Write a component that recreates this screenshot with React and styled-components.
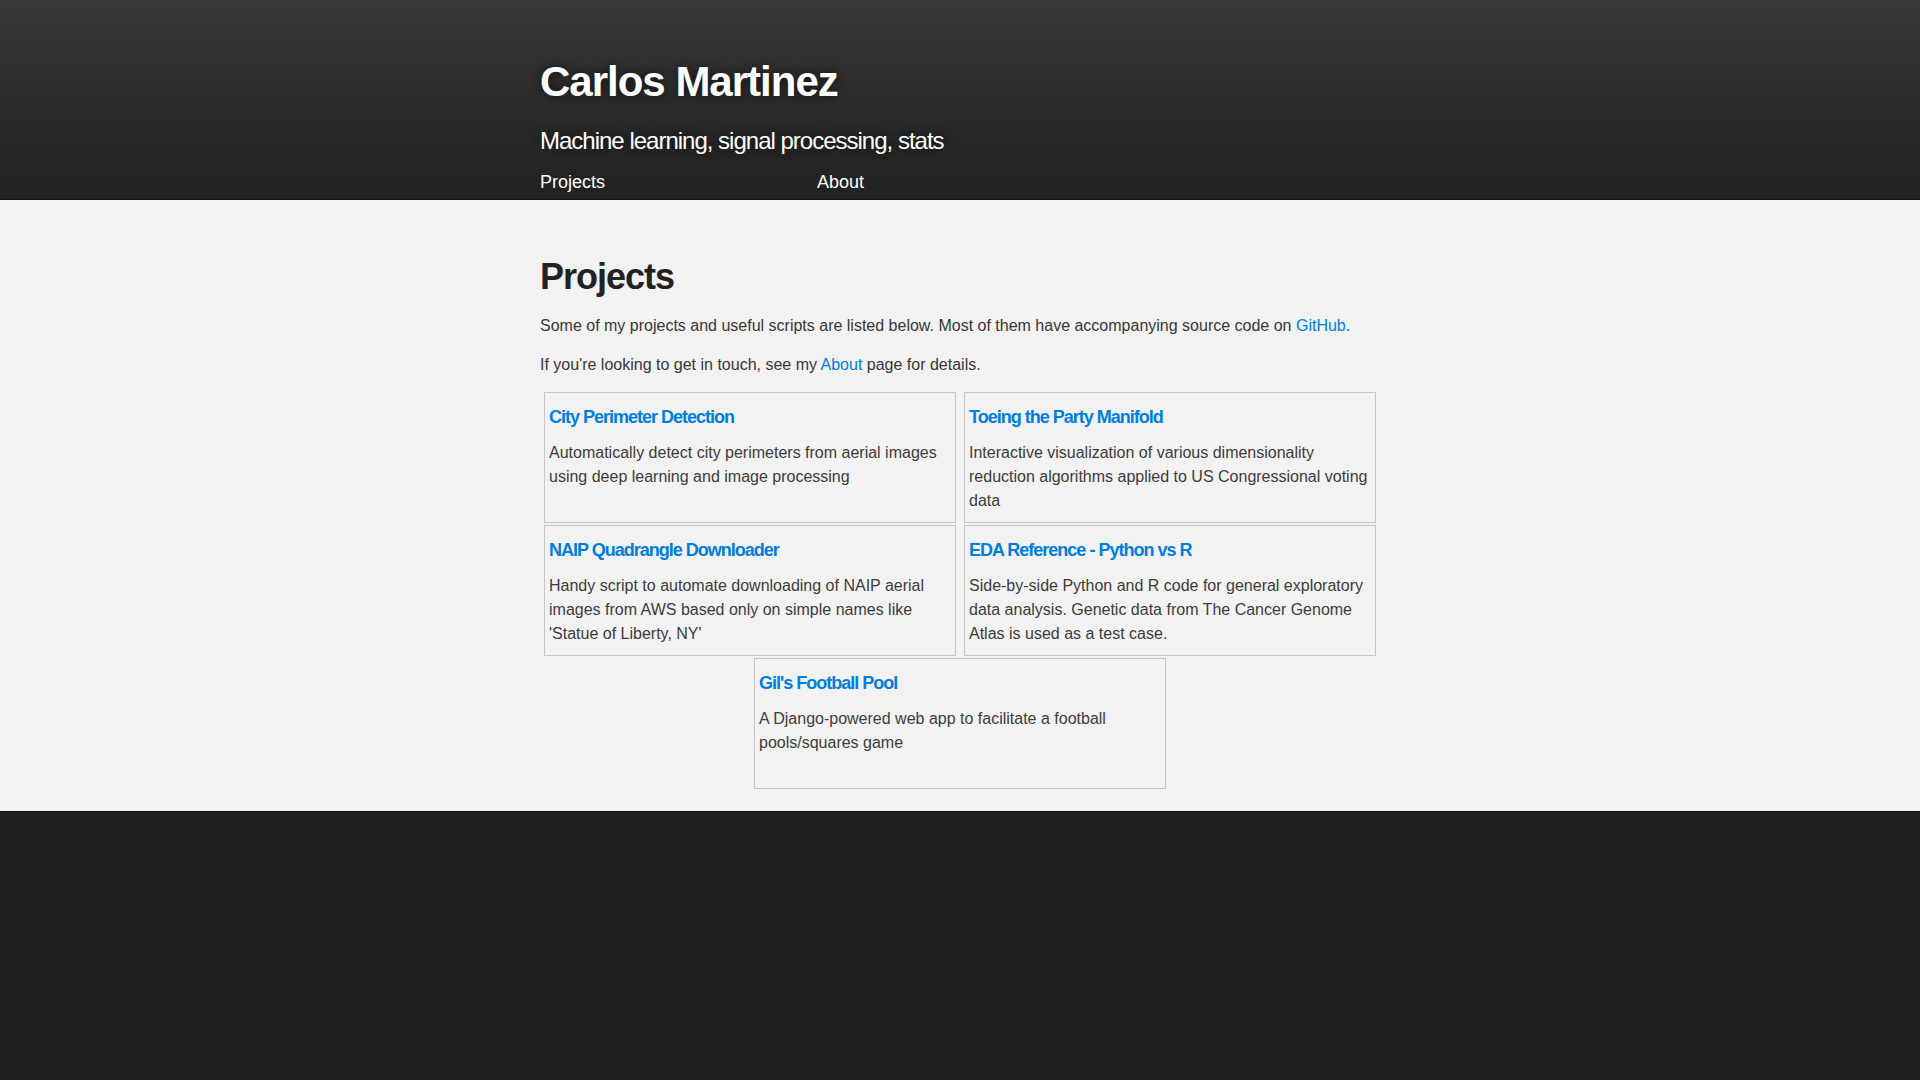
import React from "react";
import styled, { createGlobalStyle } from "styled-components";

const projects = [
  {
    name: "City Perimeter Detection",
    description:
      "Automatically detect city perimeters from aerial images using deep learning and image processing",
  },
  {
    name: "Toeing the Party Manifold",
    description:
      "Interactive visualization of various dimensionality reduction algorithms applied to US Congressional voting data",
  },
  {
    name: "NAIP Quadrangle Downloader",
    description:
      "Handy script to automate downloading of NAIP aerial images from AWS based only on simple names like 'Statue of Liberty, NY'",
  },
  {
    name: "EDA Reference - Python vs R",
    description:
      "Side-by-side Python and R code for general exploratory data analysis. Genetic data from The Cancer Genome Atlas is used as a test case.",
  },
  {
    name: "Gil's Football Pool",
    description:
      "A Django-powered web app to facilitate a football pools/squares game",
  },
];

function App() {
  return (
    <>
      <GlobalStyle />
      <HeaderWrap>
        <Inner>
          <Title>Carlos Martinez</Title>
          <Tagline>Machine learning, signal processing, stats</Tagline>
          <Nav>
            <NavLink href="#">Projects</NavLink>
            <NavLink href="#">About</NavLink>
          </Nav>
        </Inner>
      </HeaderWrap>
      <MainWrap>
        <Inner>
          <PageTitle>Projects</PageTitle>
          <Text>
            Some of my projects and useful scripts are listed below. Most of them
            have accompanying source code on <Link href="#">GitHub</Link>.
          </Text>
          <Text>
            If you're looking to get in touch, see my <Link href="#">About</Link>{" "}
            page for details.
          </Text>
          <CardGrid>
            {projects.map((p, i) => (
              <Card key={i}>
                <CardTitle>
                  <Link href="#">{p.name}</Link>
                </CardTitle>
                <CardText>{p.description}</CardText>
              </Card>
            ))}
          </CardGrid>
        </Inner>
      </MainWrap>
    </>
  );
}
export default App;

const GlobalStyle = createGlobalStyle`
  html, body {
    margin: 0;
    padding: 0;
    min-height: 100%;
  }
  body {
    background: #212121;
    color: #373737;
    font-family: "Liberation Sans", Arial, Helvetica, sans-serif;
    font-size: 16px;
    line-height: 1.5;
    -webkit-font-smoothing: antialiased;
  }
  * {
    box-sizing: border-box;
  }
`;

const Inner = styled.div`
  width: 840px;
  margin: 0 auto;
`;

const HeaderWrap = styled.header`
  background: linear-gradient(to bottom, #373737, #212121);
  border-bottom: 1px solid #111;
  padding: 50px 0 3px;
`;

const Title = styled.h1`
  margin: 0;
  color: #fff;
  font-size: 42px;
  font-weight: 700;
  letter-spacing: -1px;
  line-height: 63px;
  text-shadow: #111 0 0 10px;
`;

const Tagline = styled.h2`
  margin: 10px 0 0;
  color: #fff;
  font-size: 24px;
  font-weight: 400;
  letter-spacing: -1px;
  line-height: 36px;
  text-shadow: #111 0 0 10px;
`;

const Nav = styled.nav`
  display: flex;
  margin-top: 10px;
`;

const NavLink = styled.a`
  width: 277px;
  color: #fff;
  font-size: 18px;
  line-height: 27px;
  text-decoration: none;
`;

const MainWrap = styled.main`
  background: #f2f2f2;
  border-bottom: 1px solid #111;
  padding: 40px 0 22px;
`;

const PageTitle = styled.h1`
  margin: 10px 0;
  color: #222;
  font-size: 36px;
  font-weight: 700;
  letter-spacing: -1px;
  line-height: 54px;
`;

const Text = styled.p`
  margin: 10px 0 15px;
`;

const Link = styled.a`
  color: #007edf;
  text-decoration: none;
  &:hover {
    text-decoration: underline;
  }
`;

const CardGrid = styled.div`
  display: flex;
  flex-wrap: wrap;
  justify-content: center;
  column-gap: 8px;
  row-gap: 2px;
`;

const Card = styled.div`
  width: 412px;
  height: 131px;
  padding: 0 4px;
  border: 1px solid #c6c6c6;
  overflow: hidden;
`;

const CardTitle = styled.h3`
  margin: 11px 0 10px;
  font-size: 18px;
  font-weight: 700;
  letter-spacing: -1px;
  line-height: 27px;
`;

const CardText = styled.p`
  margin: 0;
  color: #3c3c3c;
`;
